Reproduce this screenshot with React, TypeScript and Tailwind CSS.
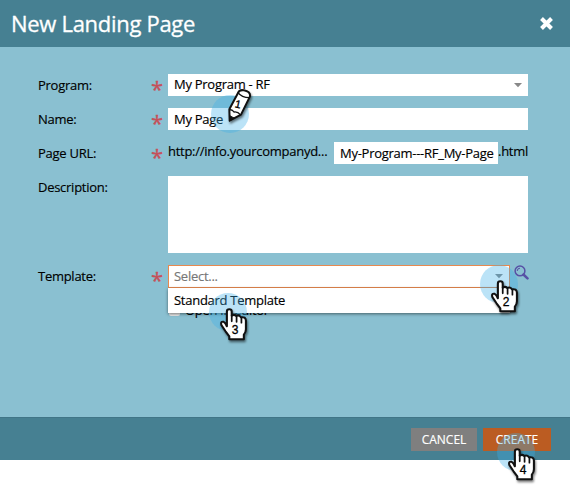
import type { ReactNode } from "react";

function Star() {
  return (
    <span className="relative top-[3px] w-[16px] shrink-0 text-[22px] leading-[22px] tracking-normal text-[#c5505a] [-webkit-text-stroke:0.3px_currentColor]">*</span>
  );
}

function Row({ label, required = true, className, children }: { label: string; required?: boolean; className: string; children: ReactNode }) {
  return (
    <div className={`flex items-start ${className}`}>
      <label className="w-[113px] shrink-0 leading-[22px]">{label}</label>
      {required ? <Star /> : <span className="w-[16px] shrink-0" />}
      <div className="ml-px flex min-w-0 flex-1">{children}</div>
    </div>
  );
}

function Caret({ className }: { className: string }) {
  return (
    <svg className={className} width="8" height="5" viewBox="0 0 8 5" fill="currentColor">
      <path d="M0 0h8L4 4.3z" />
    </svg>
  );
}

function Hand({ n, className }: { n: string; className: string }) {
  return (
    <div className={`absolute h-[38px] w-[38px] ${className}`}>
      <div className="h-full w-full rounded-full bg-[#3db0e8]/35" />
      <svg className="absolute left-[12px] top-[15px] overflow-visible drop-shadow-[1px_2px_1px_rgba(0,0,0,0.5)]" width="27" height="34" viewBox="96 90 78 102" preserveAspectRatio="none">
        <path
          d="M113 145V101Q113 94 120 94Q127 94 127 101V113Q134 108 140 114Q148 110 154 118Q167 115 168 128V154Q168 163 162 170V184H120V175L109 160L97 141Q94 130 103 131Q109 134 113 145Z"
          fill="white"
          stroke="#111"
          strokeWidth="6"
          strokeLinejoin="round"
        />
        <path d="M127 112V130M141 116V132M155 120V134" stroke="#111" strokeWidth="5" strokeLinecap="round" />
      </svg>
      <span className="absolute left-[22px] top-[31px] w-[8px] text-center font-['Liberation_Sans',sans-serif] text-[12px] leading-[12px] tracking-normal text-black [-webkit-text-stroke:0.3px_currentColor]">{n}</span>
    </div>
  );
}

function Pencil() {
  return (
    <div className="absolute left-[211px] top-[95px] h-[38px] w-[38px]">
      <div className="h-full w-full rounded-full bg-[#3db0e8]/35" />
      <svg className="absolute left-[16px] top-[-7px] overflow-visible drop-shadow-[1px_2px_1px_rgba(0,0,0,0.5)]" width="24" height="34" viewBox="260 84 72 102">
        <path d="M267 148L293 99Q297 88 311 91Q331 95 329 109L302 164L268 182Z" fill="white" stroke="#111" strokeWidth="6" strokeLinejoin="round" />
        <path d="M293 98Q304 113 327 113M267 150Q275 147 281 156Q292 154 300 164" fill="none" stroke="#111" strokeWidth="4" />
        <path d="M268 167L281 174L268 183Z" fill="#111" stroke="#111" strokeWidth="3" />
      </svg>
      <span className="absolute left-[23px] top-[3px] w-[8px] rotate-[12deg] text-center font-['Liberation_Sans',sans-serif] text-[11px] leading-[12px] tracking-normal text-black [-webkit-text-stroke:0.3px_currentColor]">1</span>
    </div>
  );
}

export default function App() {
  return (
    <main className="relative h-[487px] w-[570px] overflow-hidden bg-white font-['Open_Sans','Noto_Sans',sans-serif] text-[13px] tracking-[-0.27px] text-black [-webkit-text-stroke:0.15px_currentColor]">
      <header className="flex h-[47px] items-center justify-between bg-[#468092] pl-[11px] pr-[17px] text-white">
        <h1 className="pb-px text-[22px] leading-[45px] tracking-[-0.3px] [-webkit-text-stroke:0.3px_currentColor]">New Landing Page</h1>
        <svg width="13" height="13" viewBox="0 0 13 13" stroke="currentColor" strokeWidth="4">
          <path d="M1.5 1.5L11.5 11.5M11.5 1.5L1.5 11.5" />
        </svg>
      </header>

      <section className="h-[370px] bg-[#8ac0d1] pl-[38px] pr-[42px] pt-[27px]">
        <Row label="Program:" className="h-[34px]">
          <div className="flex h-[22px] flex-1 items-center justify-between bg-white pl-[6px] pr-[6px]">
            <span>My Program - RF</span>
            <Caret className="text-[#888]" />
          </div>
        </Row>
        <Row label="Name:" className="h-[34px]">
          <div className="h-[22px] flex-1 bg-white pl-[6px] leading-[22px]">My Page</div>
        </Row>
        <Row label="Page URL:" className="h-[34px]">
          <span className="w-[166px] shrink-0 leading-[18px]">http://info.yourcompanyd...</span>
          <span className="h-[22px] w-[164px] shrink-0 whitespace-nowrap bg-white pl-[6px] leading-[22px]">My-Program---RF_My-Page</span>
          <span className="leading-[18px]">.html</span>
        </Row>
        <Row label="Description:" required={false} className="h-[89px]">
          <div className="h-[77px] flex-1 bg-white" />
        </Row>
        <Row label="Template:" className="h-[36px]">
          <div className="flex h-[23px] w-[342px] shrink-0 items-center justify-between border border-[#e8894f] bg-white pl-[5px] pr-[6px]">
            <span className="text-[#777]">Select...</span>
            <Caret className="text-[#888]" />
          </div>
          <svg className="ml-[4px] shrink-0" width="15" height="16" viewBox="0 0 15 16" fill="none" stroke="#5750a5">
            <circle cx="6" cy="5.9" r="4.9" strokeWidth="1.5" />
            <path d="M3.2 6Q3.2 3.2 6 3.2" strokeWidth="1" />
            <path d="M9.4 9.5L13.5 13.4" strokeWidth="2.5" strokeLinecap="round" />
          </svg>
        </Row>
        <div className="ml-[131px] flex h-[18px] items-center gap-[5px]">
          <span className="h-[11px] w-[11px] rounded-[2px] bg-[#e8e8e8]" />
          <span className="leading-[18px]">Open in editor</span>
        </div>
      </section>

      <footer className="flex h-[43px] items-start gap-[6px] border-t border-[#407587] bg-[#468092] pl-[411px] pt-[10px] text-[12px] tracking-normal text-white">
        <button className="h-[23px] w-[66px] bg-[#7f7f7f]">CANCEL</button>
        <button className="h-[23px] w-[68px] bg-[#bb5c22]">CREATE</button>
      </footer>

      <div className="absolute left-[168px] top-[288px] h-[25px] w-[342px] bg-white pl-[6px] leading-[25px] shadow-[0_1px_3px_rgba(0,0,0,0.5)]">
        Standard Template
      </div>

      <Pencil />
      <Hand n="2" className="left-[480px] top-[265px]" />
      <Hand n="3" className="left-[209px] top-[293px]" />
      <Hand n="4" className="left-[497px] top-[433px]" />
    </main>
  );
}
